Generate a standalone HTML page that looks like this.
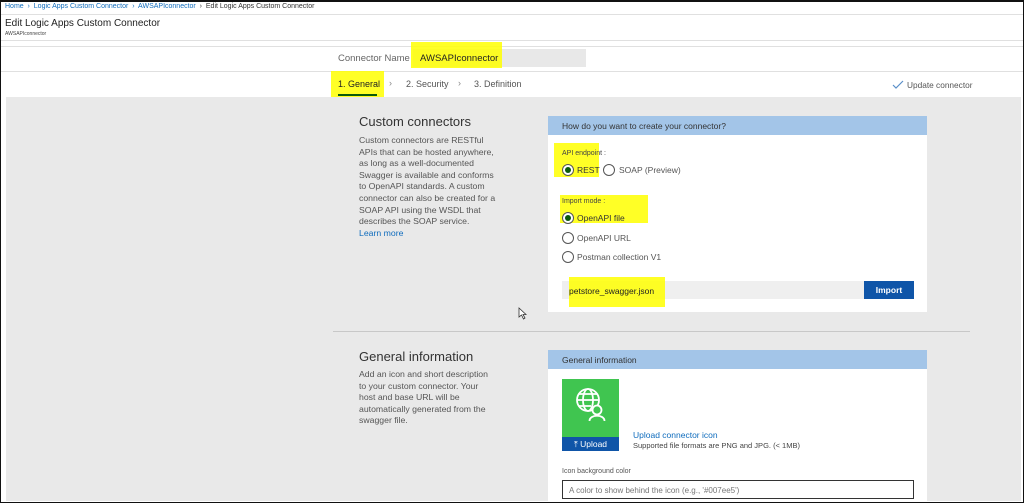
<!DOCTYPE html>
<html><head><meta charset="utf-8"><style>
*{margin:0;padding:0;box-sizing:border-box}
body{width:1024px;height:503px;overflow:hidden;background:#fff;font-family:"Liberation Sans",sans-serif;position:relative;color:#333}
.a{position:absolute;white-space:nowrap}
.hl{position:absolute;background:rgba(255,255,0,.85)}
.line{position:absolute;height:1px;background:#e0e0e0}
.rad{position:absolute;width:12px;height:12px;border:1px solid #555;border-radius:50%;background:#fff}
.rad.on::after{content:"";position:absolute;left:2px;top:2px;width:6px;height:6px;border-radius:50%;background:#0b5a0b}
</style></head><body>
<div class="a" style="left:0;top:0;width:1024px;height:503px;border:1px solid #111;z-index:50;pointer-events:none"></div>
<div class="a" style="left:0;top:0;width:1024px;height:2px;background:#111;z-index:50"></div>
<div class="a" style="left:5px;top:3px;font-size:7px;color:#0f6cbd">Home &nbsp;›&nbsp; Logic Apps Custom Connector &nbsp;›&nbsp; AWSAPIconnector &nbsp;<span style="color:#333">›&nbsp; Edit Logic Apps Custom Connector</span></div>
<div class="line" style="left:1px;top:14px;width:1022px"></div>
<div class="a" style="left:5px;top:18px;font-size:10px;color:#222">Edit Logic Apps Custom Connector</div>
<div class="a" style="left:5px;top:31px;font-size:5px;color:#444">AWSAPIconnector</div>
<div class="line" style="left:1px;top:40px;width:1022px"></div>
<div class="line" style="left:1px;top:46px;width:1022px"></div>
<div class="a" style="left:413px;top:49px;width:173px;height:18px;background:#e8e8e8"></div>
<div class="hl" style="left:411px;top:42px;width:91px;height:26px"></div>
<div class="a" style="left:338px;top:53px;font-size:9.5px;color:#666">Connector Name</div>
<div class="a" style="left:420px;top:53px;font-size:9.5px;color:#222">AWSAPIconnector</div>
<div class="line" style="left:1px;top:71px;width:1022px"></div>
<div class="hl" style="left:331px;top:71px;width:53px;height:28px"></div>
<div class="a" style="left:338px;top:79px;font-size:9px;color:#222">1. General</div>
<div class="a" style="left:338px;top:94px;width:39px;height:2px;background:#0b5a0b"></div>
<div class="a" style="left:389px;top:78px;font-size:9px;color:#888">›</div>
<div class="a" style="left:406px;top:79px;font-size:9px;color:#555">2. Security</div>
<div class="a" style="left:458px;top:78px;font-size:9px;color:#888">›</div>
<div class="a" style="left:474px;top:79px;font-size:9px;color:#555">3. Definition</div>
<svg class="a" style="left:892px;top:80px" width="12" height="9"><path d="M1 5 L4 8 L11 1" stroke="#5a8fc9" stroke-width="1.2" fill="none"/></svg>
<div class="a" style="left:907px;top:80px;font-size:8.3px;color:#555">Update connector</div>
<div class="a" style="left:6px;top:97px;width:1015px;height:404px;background:#e9e9e9"></div>
<div class="a" style="left:359px;top:114px;font-size:13px;color:#333">Custom connectors</div>
<div class="a" style="left:359px;top:135px;font-size:8.7px;line-height:11.6px;color:#555">Custom connectors are RESTful<br>APIs that can be hosted anywhere,<br>as long as a well-documented<br>Swagger is available and conforms<br>to OpenAPI standards. A custom<br>connector can also be created for a<br>SOAP API using the WSDL that<br>describes the SOAP service.<br><span style="color:#0f6cbd">Learn more</span></div>
<div class="a" style="left:548px;top:116px;width:379px;height:196px;background:#fff"></div>
<div class="a" style="left:548px;top:116px;width:379px;height:19px;background:#a3c5e8"></div>
<div class="a" style="left:562px;top:121px;font-size:8.5px;color:#333">How do you want to create your connector?</div>
<div class="hl" style="left:554px;top:143px;width:45px;height:34px"></div>
<div class="a" style="left:562px;top:150px;font-size:7px;color:#444">API endpoint :</div>
<div class="rad on" style="left:562px;top:164px"></div>
<div class="a" style="left:577px;top:165px;font-size:8.5px">REST</div>
<div class="rad" style="left:603px;top:164px"></div>
<div class="a" style="left:619px;top:165px;font-size:8.5px;color:#555">SOAP (Preview)</div>
<div class="hl" style="left:560px;top:195px;width:88px;height:28px"></div>
<div class="a" style="left:562px;top:198px;font-size:7px;color:#444">Import mode :</div>
<div class="rad on" style="left:562px;top:212px"></div>
<div class="a" style="left:577px;top:213px;font-size:8.5px">OpenAPI file</div>
<div class="rad" style="left:562px;top:232px"></div>
<div class="a" style="left:577px;top:233px;font-size:8.5px;color:#555">OpenAPI URL</div>
<div class="rad" style="left:562px;top:251px"></div>
<div class="a" style="left:577px;top:252px;font-size:8.5px;color:#555">Postman collection V1</div>
<div class="a" style="left:562px;top:281px;width:302px;height:18px;background:#efefef"></div>
<div class="hl" style="left:569px;top:277px;width:96px;height:30px"></div>
<div class="a" style="left:569px;top:286px;font-size:8.5px;color:#222">petstore_swagger.json</div>
<div class="a" style="left:864px;top:281px;width:50px;height:18px;background:#0f55a8;color:#fff;font-size:8.5px;font-weight:bold;text-align:center;line-height:18px">Import</div>
<svg class="a" style="left:518px;top:307px" width="9" height="13"><path d="M1 1 L1 10 L3.5 8 L5.5 12 L7 11 L5 7.5 L8 7.5 Z" fill="#fff" stroke="#333" stroke-width=".8"/></svg>
<div class="a" style="left:333px;top:331px;width:637px;height:1px;background:#c8c8c8"></div>
<div class="a" style="left:359px;top:349px;font-size:13px;color:#333">General information</div>
<div class="a" style="left:359px;top:369px;font-size:8.7px;line-height:11.6px;color:#555">Add an icon and short description<br>to your custom connector. Your<br>host and base URL will be<br>automatically generated from the<br>swagger file.</div>
<div class="a" style="left:548px;top:350px;width:379px;height:152px;background:#fff"></div>
<div class="a" style="left:548px;top:350px;width:379px;height:19px;background:#a3c5e8"></div>
<div class="a" style="left:562px;top:355px;font-size:8.5px;color:#333">General information</div>
<div class="a" style="left:562px;top:379px;width:57px;height:72px;background:#40c550"></div>
<svg class="a" style="left:574px;top:386px" width="34" height="36" viewBox="0 0 34 36" fill="none" stroke="#fff" stroke-width="1.8"><circle cx="14" cy="14" r="11"/><ellipse cx="14" cy="14" rx="5" ry="11"/><path d="M3 14 H25 M5 8 H23 M5 20 H17"/><circle cx="23" cy="24" r="4.5" fill="#40c550"/><path d="M15.5 35 C15.5 28 30.5 28 30.5 35" fill="#40c550"/></svg>
<div class="a" style="left:562px;top:437px;width:57px;height:14px;background:#0f55a8;color:#fff;font-size:8.5px;text-align:center;line-height:14px">⤒ Upload</div>
<div class="a" style="left:633px;top:430px;font-size:8.5px;color:#0f6cbd">Upload connector icon</div>
<div class="a" style="left:633px;top:441px;font-size:7.5px;color:#444">Supported file formats are PNG and JPG. (&lt; 1MB)</div>
<div class="a" style="left:562px;top:468px;font-size:7px;color:#555">Icon background color</div>
<div class="a" style="left:562px;top:480px;width:352px;height:19px;border:1px solid #333;background:#fff"></div>
<div class="a" style="left:569px;top:486px;font-size:8px;color:#777">A color to show behind the icon (e.g., '#007ee5')</div>
</body></html>
